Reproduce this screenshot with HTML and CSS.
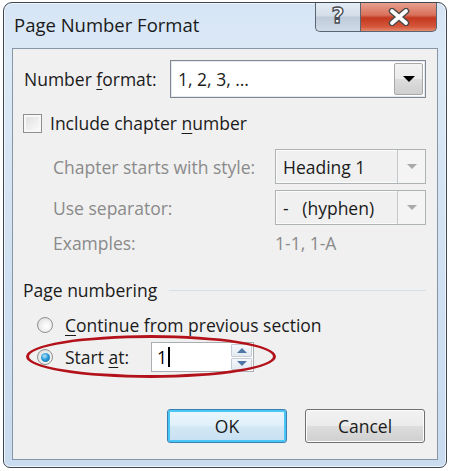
FILE: index.html
```html
<!DOCTYPE html>
<html>
<head>
<meta charset="utf-8">
<link rel="stylesheet" href="styles.css">
</head>
<body>
<div class="window">
  <div class="titlebar">
    <div class="title">Page Number Format</div>
    <div class="caption-btns">
      <div class="cbtn help"><span class="qmark">?</span></div>
      <div class="cbtn close">
        <svg width="24" height="18" viewBox="0 0 24 18">
          <path d="M5 3 L19 15 M19 3 L5 15" stroke="#4a4a4a" stroke-width="6.5" stroke-linecap="round"/>
          <path d="M5 3 L19 15 M19 3 L5 15" stroke="#ffffff" stroke-width="3.8" stroke-linecap="round"/>
        </svg>
      </div>
    </div>
  </div>
  <div class="client">
    <div class="row row-format">
      <label class="lbl">Number <u>f</u>ormat:</label>
      <div class="combo active">
        <span class="combo-text">1, 2, 3, …</span>
        <span class="drop"><span class="tri dark"></span></span>
      </div>
    </div>
    <div class="row row-check">
      <span class="checkbox"></span>
      <span class="lbl">Include chapter <u>n</u>umber</span>
    </div>
    <div class="row row-sub row-combo">
      <span class="lbl dis sublbl">Chapter starts with style:</span>
      <div class="combo disabled">
        <span class="combo-text">Heading 1</span>
        <span class="drop"><span class="tri light"></span></span>
      </div>
    </div>
    <div class="row row-sub row-combo second">
      <span class="lbl dis sublbl">Use separator:</span>
      <div class="combo disabled">
        <span class="combo-text">-&nbsp;&nbsp;&nbsp;(hyphen)</span>
        <span class="drop"><span class="tri light"></span></span>
      </div>
    </div>
    <div class="row row-sub row-examples">
      <span class="lbl dis sublbl">Examples:</span>
      <span class="lbl dis">1-1, 1-A</span>
    </div>
    <div class="group-head">
      <span class="lbl">Page numbering</span>
      <span class="group-line"></span>
    </div>
    <div class="row row-radio">
      <span class="radio"></span>
      <span class="lbl"><u>C</u>ontinue from previous section</span>
    </div>
    <div class="row row-radio row-start">
      <span class="radio checked"><span class="dot"></span></span>
      <span class="lbl start-lbl">Start <u>a</u>t:</span>
      <div class="spin">
        <div class="spin-input">1<span class="caret"></span></div>
        <div class="spin-btns">
          <span class="sbtn"><span class="stri up"></span></span>
          <span class="sbtn"><span class="stri down"></span></span>
        </div>
      </div>
      <span class="highlight"></span>
    </div>
    <div class="buttons">
      <div class="btn default">OK</div>
      <div class="btn">Cancel</div>
    </div>
  </div>
</div>
</body>
</html>
```
FILE: styles.css
```css
html, body {
  margin: 0;
  padding: 0;
  background: #ffffff;
}
body {
  width: 450px;
  height: 471px;
  font-family: "Open Sans", "Noto Sans", sans-serif;
  font-size: 17.5px;
  color: #1b1b1b;
  overflow: hidden;
}
.window {
  margin: 2px 3px;
  width: 444px;
  height: 466px;
  box-sizing: border-box;
  border: 1px solid #3f4650;
  border-radius: 9px 9px 7px 7px;
  background: linear-gradient(to bottom, #d6e5f5 0%, #dce9f6 12%, #cfe0f2 60%, #c8dbef 100%);
  box-shadow: inset 0 0 0 1px #eef5fc;
  display: flex;
  flex-direction: column;
  overflow: hidden;
}
.titlebar {
  height: 45px;
  display: flex;
  justify-content: space-between;
  align-items: flex-start;
  flex: none;
}
.title {
  margin: 9px 0 0 10px;
  font-size: 18.5px;
  color: #1a1a1a;
}
.caption-btns {
  display: flex;
  margin-right: 9px;
  margin-top: -1px;
}
.cbtn {
  height: 30px;
  box-sizing: border-box;
  border: 1px solid #5b6572;
  border-top: none;
  display: flex;
  align-items: center;
  justify-content: center;
}
.help {
  width: 45px;
  border-radius: 0 0 0 5px;
  border-right: none;
  background: linear-gradient(to bottom, #e6edf5 0%, #d3dde8 48%, #bfcbd9 52%, #cfdbe7 100%);
}
.qmark {
  font-family: "DejaVu Sans", sans-serif;
  font-weight: bold;
  font-size: 22px;
  color: #ffffff;
  -webkit-text-stroke: 1.4px #4b4f55;
  line-height: 1;
  margin-top: -1px;
}
.close {
  width: 77px;
  border-radius: 0 0 5px 0;
  background: linear-gradient(to bottom, #e8a493 0%, #d8705a 45%, #c3391f 55%, #d5573b 85%, #e38a6e 100%);
}
.client {
  margin: 0 8px 0 8px;
  height: 412px;
  box-sizing: border-box;
  border: 1px solid #8796a7;
  background: #f0f0f0;
  padding: 11px 11px 0 11px;
  display: flex;
  flex-direction: column;
  position: relative;
}
.row {
  display: flex;
  align-items: center;
}
.lbl {
  white-space: nowrap;
}
.lbl u {
  text-decoration-thickness: 1px;
  text-underline-offset: 3px;
}
.dis {
  color: #8a8a8a;
}
.row-format {
  height: 38px;
}
.row-format .lbl {
  width: 146px;
  flex: none;
}
.combo {
  flex: 1;
  height: 100%;
  box-sizing: border-box;
  display: flex;
  align-items: stretch;
}
.combo.active {
  border: 1px solid #828790;
  background: #ffffff;
  box-shadow: inset 0 0 0 1px #e3e9ef;
}
.combo.disabled {
  border: 1px solid #adb2b5;
  background: #f0f0f0;
  box-shadow: inset 0 0 0 1px #fbfbfb;
}
.combo-text {
  flex: 1;
  display: flex;
  align-items: center;
  padding-left: 7px;
}
.drop {
  width: 27px;
  display: flex;
  align-items: center;
  justify-content: center;
  margin: 2px;
}
.active .drop {
  border: 1px solid #a8a8a8;
  border-radius: 2px;
  background: linear-gradient(to bottom, #f3f3f3 0%, #ebebeb 50%, #dddddd 51%, #cfcfcf 100%);
}
.disabled .drop {
  margin: 0;
  border-left: 1px solid #c4c8cb;
  background: #f4f4f4;
}
.tri {
  width: 0;
  height: 0;
  border-left: 6px solid transparent;
  border-right: 6px solid transparent;
}
.tri.dark {
  border-top: 6px solid #000000;
}
.tri.light {
  border-left-width: 5px;
  border-right-width: 5px;
  border-top: 5px solid #a9a9a9;
}
.row-check {
  margin-top: 12px;
  height: 26px;
}
.checkbox {
  width: 19px;
  height: 19px;
  box-sizing: border-box;
  border: 1px solid #8f8f8f;
  background: linear-gradient(135deg, #dcdcdc 0%, #f4f4f4 70%, #ffffff 100%);
  box-shadow: inset 0 0 0 2px #f7f7f7;
  margin: 0 8px 0 -1px;
  flex: none;
}
.row-sub {
  padding-left: 29px;
}
.sublbl {
  width: 222px;
  flex: none;
}
.row-combo {
  margin-top: 13px;
  height: 35px;
}
.row-combo.second {
  margin-top: 6px;
}
.row-examples {
  margin-top: 5px;
  height: 25px;
}
.group-head {
  margin-top: 22px;
  height: 26px;
  display: flex;
  align-items: center;
  margin-left: -1px;
}
.group-line {
  flex: 1;
  height: 1px;
  background: #d5dfe5;
  margin-left: 12px;
}
.row-radio {
  height: 26px;
  margin-top: 9px;
  padding-left: 13px;
}
.radio {
  width: 16px;
  height: 16px;
  box-sizing: border-box;
  border-radius: 50%;
  border: 1px solid #8e8f8f;
  background: radial-gradient(circle at 60% 60%, #ffffff 0%, #f2f2f2 40%, #d4d4d4 100%);
  margin-right: 12px;
  flex: none;
  display: flex;
  align-items: center;
  justify-content: center;
}
.radio .dot {
  width: 9px;
  height: 9px;
  border-radius: 50%;
  background: radial-gradient(circle at 40% 35%, #b9e4f9 0%, #2a9ad9 45%, #0f5c8f 100%);
}
.row-start {
  position: relative;
  margin-top: 4px;
  height: 30px;
}
.start-lbl {
  width: 86px;
  flex: none;
}
.spin {
  display: flex;
  height: 30px;
}
.spin-input {
  width: 80px;
  box-sizing: border-box;
  border: 1px solid #abadb3;
  border-right: none;
  background: #ffffff;
  display: flex;
  align-items: center;
  padding-left: 5px;
  color: #000000;
}
.caret {
  display: inline-block;
  width: 2px;
  height: 20px;
  background: #000000;
  margin-left: 1px;
}
.spin-btns {
  width: 23px;
  display: flex;
  flex-direction: column;
  box-sizing: border-box;
  border: 1px solid #abadb3;
  border-left: none;
  background: #ffffff;
  padding: 1px 1px 1px 0;
  gap: 1px;
}
.sbtn {
  flex: 1;
  border: 1px solid #c7cdd4;
  border-radius: 1px;
  background: linear-gradient(to bottom, #f5f8fb 0%, #e4eaf1 100%);
  display: flex;
  align-items: center;
  justify-content: center;
}
.stri {
  width: 0;
  height: 0;
  border-left: 5px solid transparent;
  border-right: 5px solid transparent;
}
.stri.up {
  border-bottom: 5px solid #4f77a6;
}
.stri.down {
  border-top: 5px solid #4f77a6;
}
.highlight {
  position: absolute;
  left: 2px;
  top: -7px;
  width: 250px;
  height: 43px;
  box-sizing: border-box;
  border: 3.5px solid #b3121a;
  border-radius: 50%;
  pointer-events: none;
}
.buttons {
  margin-top: 37px;
  display: flex;
  justify-content: flex-end;
  gap: 18px;
  padding-right: 1px;
}
.btn {
  width: 120px;
  height: 34px;
  box-sizing: border-box;
  border: 1px solid #707070;
  border-radius: 3px;
  background: linear-gradient(to bottom, #f2f2f2 0%, #ebebeb 50%, #dddddd 51%, #cfcfcf 100%);
  box-shadow: inset 0 0 0 1px #fcfcfc;
  display: flex;
  align-items: center;
  justify-content: center;
  color: #1b1b1b;
}
.btn.default {
  border-color: #3c7fb1;
  box-shadow: inset 0 0 0 2px #48c6f5;
  background: linear-gradient(to bottom, #eaf6fd 0%, #e0f0fa 50%, #d4e8f5 51%, #c6e0f2 100%);
}
```
